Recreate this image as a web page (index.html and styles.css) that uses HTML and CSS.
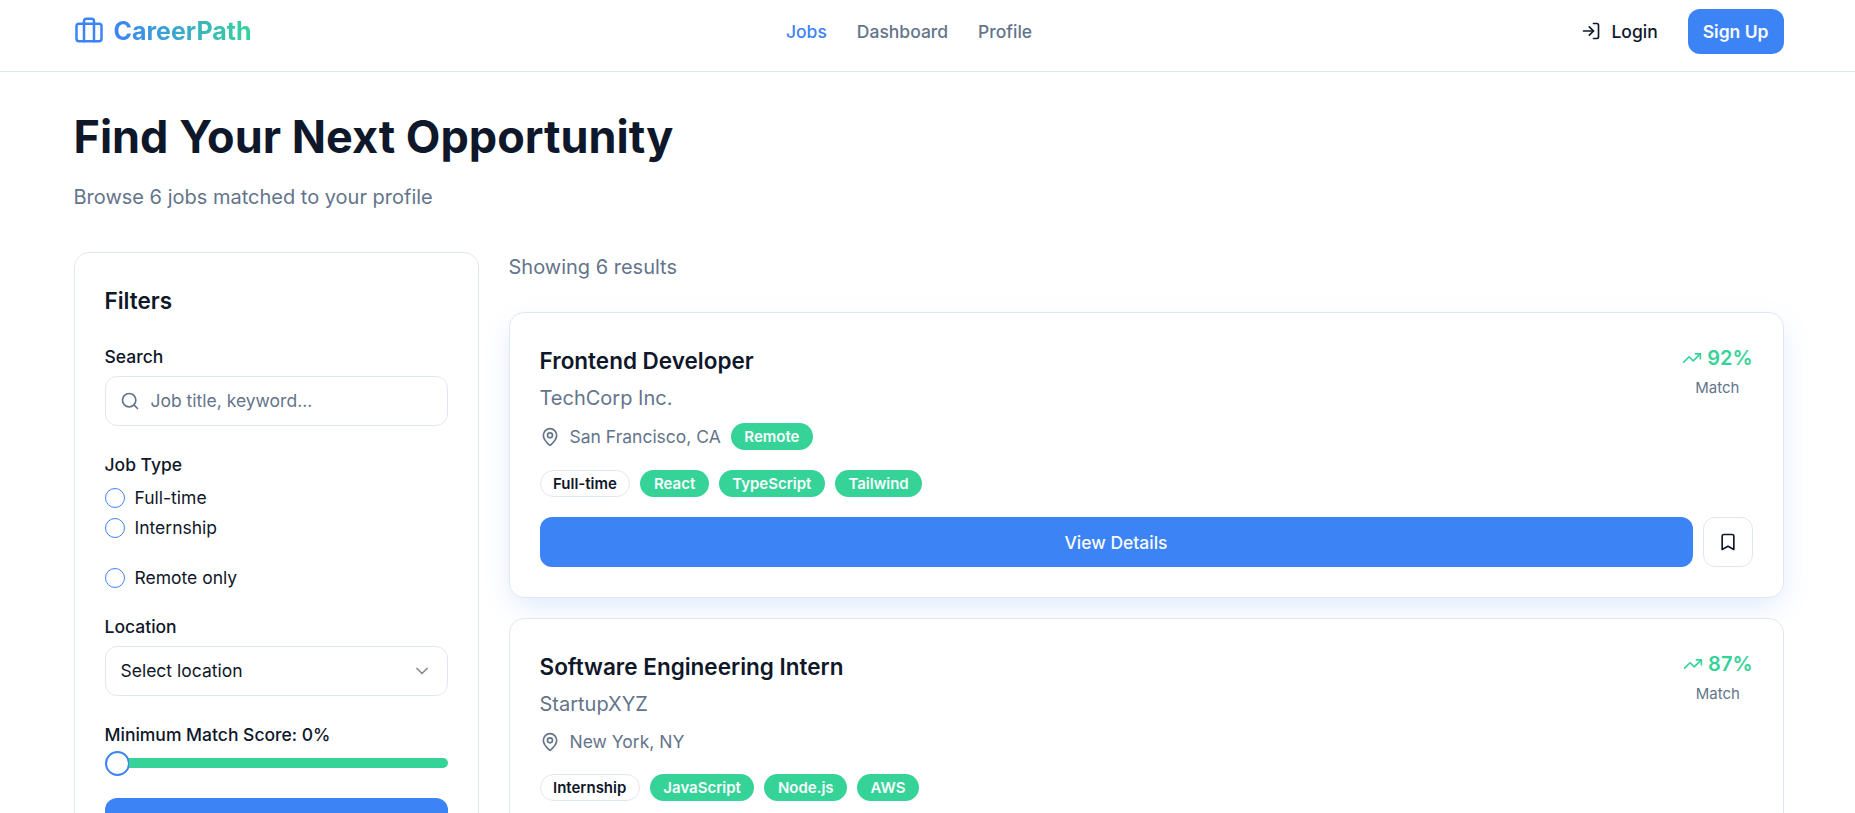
FILE: index.html
```html
<!DOCTYPE html>
<html lang="en">
<head>
<meta charset="utf-8">
<title>CareerPath</title>
<link rel="stylesheet" href="styles.css">
</head>
<body>
<svg class="sprite" aria-hidden="true">
  <symbol id="pin" viewBox="0 0 24 24"><path d="M20 10c0 4.993-5.539 10.193-7.399 11.799a1 1 0 0 1-1.202 0C9.539 20.193 4 14.993 4 10a8 8 0 0 1 16 0"/><circle cx="12" cy="10" r="3"/></symbol>
  <symbol id="trend" viewBox="0 0 24 24"><path d="M22 7 13.5 15.5 8.5 10.5 2 17"/><path d="M16 7h6v6"/></symbol>
  <symbol id="bookmark" viewBox="0 0 24 24"><path d="m19 21-7-4-7 4V5a2 2 0 0 1 2-2h10a2 2 0 0 1 2 2v16z"/></symbol>
</svg>
<header class="header">
  <div class="header-inner">
    <a class="logo">
      <svg class="icon logo-icon" viewBox="0 0 24 24"><path d="M16 21V5a2 2 0 0 0-2-2h-4a2 2 0 0 0-2 2v16"/><rect x="2" y="7" width="20" height="14" rx="2"/></svg>
      <span class="logo-text">CareerPath</span>
    </a>
    <nav class="nav"><a class="active">Jobs</a><a>Dashboard</a><a>Profile</a></nav>
    <div class="actions">
      <a class="login"><svg class="icon" viewBox="0 0 24 24"><path d="M15 3h4a2 2 0 0 1 2 2v14a2 2 0 0 1-2 2h-4"/><path d="m10 17 5-5-5-5"/><path d="M15 12H3"/></svg>Login</a>
      <a class="signup">Sign Up</a>
    </div>
  </div>
</header>
<main class="page">
  <h1 class="title">Find Your Next Opportunity</h1>
  <p class="subtitle">Browse 6 jobs matched to your profile</p>
  <div class="layout">
    <aside class="filters">
      <h3 class="heading">Filters</h3>
      <div class="field">
        <div class="label">Search</div>
        <div class="box search"><svg class="icon" viewBox="0 0 24 24"><circle cx="11" cy="11" r="8"/><path d="m21 21-4.3-4.3"/></svg><span>Job title, keyword...</span></div>
      </div>
      <div class="field types">
        <div class="label">Job Type</div>
        <div class="option"><span class="radio"></span><span>Full-time</span></div>
        <div class="option"><span class="radio"></span><span>Internship</span></div>
      </div>
      <div class="option remote"><span class="radio"></span><span>Remote only</span></div>
      <div class="field">
        <div class="label">Location</div>
        <div class="box select"><span>Select location</span><svg class="icon" viewBox="0 0 24 24"><path d="m6 9 6 6 6-6"/></svg></div>
      </div>
      <div class="field">
        <div class="label">Minimum Match Score: 0%</div>
        <div class="slider"><span class="thumb"></span><span class="track"></span></div>
      </div>
      <div class="button"></div>
    </aside>
    <section class="results">
      <p class="count">Showing 6 results</p>
      <article class="card raised">
        <div class="card-top">
          <div>
            <h3 class="heading">Frontend Developer</h3>
            <p class="company">TechCorp Inc.</p>
            <div class="place"><svg class="icon"><use href="#pin"/></svg><span>San Francisco, CA</span><span class="badge">Remote</span></div>
          </div>
          <div class="match"><div class="score"><svg class="icon"><use href="#trend"/></svg>92%</div><div class="match-label">Match</div></div>
        </div>
        <div class="tags"><span class="badge outline">Full-time</span><span class="badge">React</span><span class="badge">TypeScript</span><span class="badge">Tailwind</span></div>
        <div class="card-actions"><a class="button">View Details</a><a class="save"><svg class="icon"><use href="#bookmark"/></svg></a></div>
      </article>
      <article class="card">
        <div class="card-top">
          <div>
            <h3 class="heading">Software Engineering Intern</h3>
            <p class="company">StartupXYZ</p>
            <div class="place"><svg class="icon"><use href="#pin"/></svg><span>New York, NY</span></div>
          </div>
          <div class="match"><div class="score"><svg class="icon"><use href="#trend"/></svg>87%</div><div class="match-label">Match</div></div>
        </div>
        <div class="tags"><span class="badge outline">Internship</span><span class="badge">JavaScript</span><span class="badge">Node.js</span><span class="badge">AWS</span></div>
      </article>
    </section>
  </div>
</main>
</body>
</html>
```
FILE: styles.css
```css
:root {
  --blue: #3c83f6;
  --green: #36d399;
  --ink: #0f172a;
  --muted: #64748b;
  --line: #e1e7ef;
}
* { box-sizing: border-box; margin: 0; padding: 0; }
html, body { height: 813px; overflow: hidden; }
body { background: #fff; color: var(--ink); font: 400 17.5px/25px Inter, sans-serif; }
.sprite { display: none; }
.icon { width: 20px; height: 20px; flex: none; fill: none; stroke: currentColor; stroke-width: 2; stroke-linecap: round; stroke-linejoin: round; }

.header { height: 72px; border-bottom: 1px solid var(--line); }
.header-inner { width: 1710px; height: 63px; margin-left: 73.5px; display: flex; align-items: center; justify-content: space-between; font-weight: 500; }
.logo { display: flex; align-items: center; gap: 10px; color: var(--blue); }
.logo-icon { width: 30px; height: 30px; margin-bottom: 3px; }
.logo-text { font-size: 25px; line-height: 35px; font-weight: 700; background: linear-gradient(90deg, var(--blue), var(--green)); -webkit-background-clip: text; background-clip: text; color: transparent; }
.nav { display: flex; gap: 30px; color: var(--muted); }
.nav .active { color: var(--blue); }
.actions { display: flex; align-items: center; gap: 15px; }
.login { display: flex; align-items: center; gap: 10px; padding: 0 15px; }
.login .icon { margin-bottom: 1px; }
.signup { height: 45px; display: flex; align-items: center; padding: 0 15px; border-radius: 12px; background: var(--blue); color: #f8fafc; font-weight: 600; }

.page { width: 1710px; margin-left: 73.5px; padding-top: 40px; }
.title { font-size: 45px; line-height: 50px; font-weight: 700; margin-bottom: 20px; }
.subtitle { font-size: 20px; line-height: 30px; color: var(--muted); margin-bottom: 40px; }
.layout { display: grid; grid-template-columns: 405px 1275px; gap: 30px; align-items: start; }
.heading { font-size: 22.5px; line-height: 35px; font-weight: 600; }

.filters { border: 1px solid var(--line); border-radius: 15px; padding: 30px; background: #fff; }
.field { margin-top: 25px; }
.label { line-height: 28px; font-weight: 500; margin-bottom: 5px; }
.box { height: 50px; border: 1px solid var(--line); border-radius: 12px; padding: 0 15px; display: flex; align-items: center; }
.box span, .option span:last-child { padding-bottom: 1px; }
.search { gap: 11px; padding-left: 14px; color: var(--muted); }
.select { justify-content: space-between; }
.select .icon { opacity: .5; }
.types { display: grid; gap: 10px; }
.types .label { margin-bottom: -1px; }
.option { height: 20px; display: flex; align-items: center; gap: 10px; }
.radio { width: 20px; height: 20px; border: 1px solid var(--blue); border-radius: 50%; }
.remote { margin-top: 30px; }
.slider { display: flex; align-items: center; height: 25px; margin-top: -3px; }
.thumb { width: 25px; height: 25px; border: 2px solid var(--blue); border-radius: 50%; background: #fff; }
.track { flex: 1; height: 10px; margin: 0 0 1px -1px; border-radius: 0 5px 5px 0; background: var(--green); }
.button { height: 50px; flex: 1; display: flex; align-items: center; justify-content: center; border-radius: 12px; background: var(--blue); color: #f8fafc; font-weight: 500; }
.filters .button { margin-top: 22px; }

.results { display: grid; gap: 20px; }
.count { font-size: 20px; line-height: 30px; color: var(--muted); margin-bottom: 10px; }
.card { min-height: 284px; border: 1px solid var(--line); border-radius: 15px; padding: 30px; background: #fff; display: grid; align-content: start; gap: 20px; position: relative; }
.raised { box-shadow: 0 10px 30px -5px rgba(60, 131, 246, .2); }
.card-top { display: flex; justify-content: space-between; align-items: flex-start; }
.company { font-size: 20px; line-height: 30px; color: var(--muted); margin: 5px 0 10px; }
.place { display: flex; align-items: center; gap: 10px; color: var(--muted); }
.badge { height: 27px; display: flex; align-items: center; padding: 0 13.5px; border-radius: 14px; background: var(--green); color: #f8fafc; font-size: 15px; line-height: 20px; font-weight: 600; }
.outline { background: #fff; color: var(--ink); border: 1px solid var(--line); padding: 0 12.5px; }
.tags { display: flex; gap: 10px; }
.match { display: flex; flex-direction: column; align-items: center; gap: 5px; }
.score { display: flex; align-items: center; gap: 5px; color: var(--green); font-size: 20px; line-height: 30px; font-weight: 600; }
.match-label { font-size: 15px; line-height: 20px; color: var(--muted); }
.card-actions { display: flex; gap: 10px; }
.save { width: 50px; height: 50px; display: flex; align-items: center; justify-content: center; border: 1px solid var(--line); border-radius: 12px; }
```
